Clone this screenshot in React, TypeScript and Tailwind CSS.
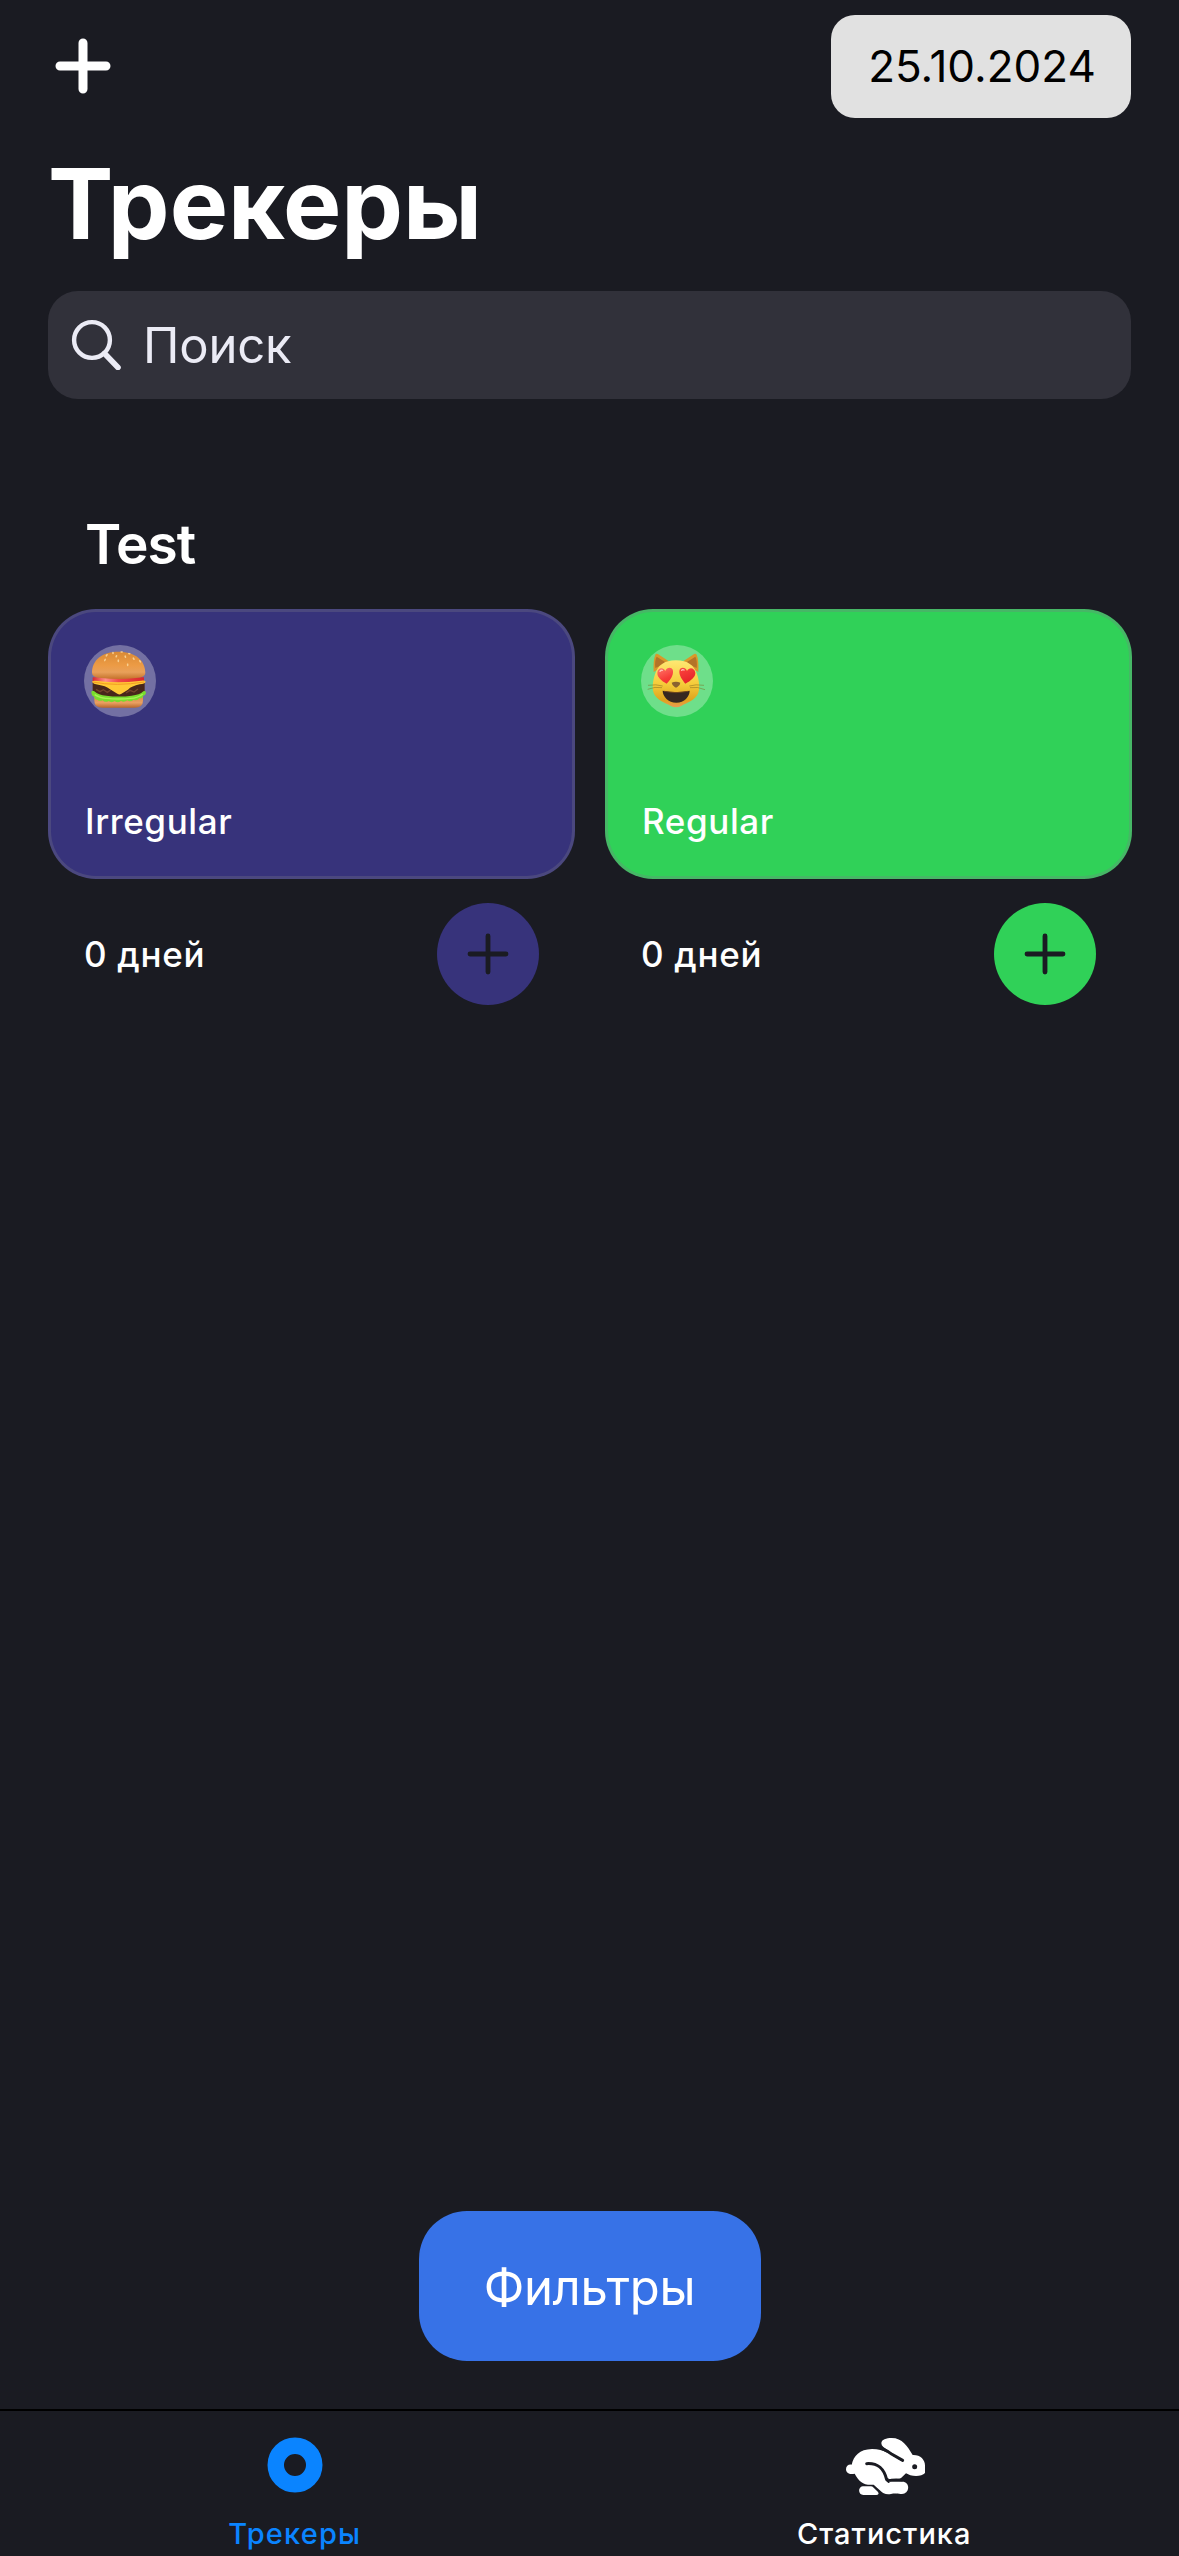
import type { ReactNode } from "react";

function PlusIcon() {
  return (
    <svg className="h-[56px] w-[56px]" viewBox="0 0 56 56" stroke="white" strokeWidth="9" strokeLinecap="round">
      <path d="M28 5v46M5 28h46" />
    </svg>
  );
}

function SearchIcon() {
  return (
    <svg className="-mt-[3px] h-[52px] w-[52px]" viewBox="0 0 52 52" fill="none" stroke="#ebebf5" strokeLinecap="round">
      <circle cx="22" cy="22" r="17.9" strokeWidth="4.4" />
      <path d="M36 37L48 49.5" strokeWidth="5.6" />
      <path d="M34 35l3 3" strokeWidth="4.4" />
    </svg>
  );
}

function Burger() {
  return (
    <svg className="h-[72px] w-[72px]" viewBox="24 27 216 216">
      <defs>
        <linearGradient id="bun" x1="0" y1="0" x2="0" y2="1">
          <stop offset="0" stopColor="#d98a35" />
          <stop offset="0.5" stopColor="#ec9b45" />
          <stop offset="0.75" stopColor="#e8a05a" />
          <stop offset="1" stopColor="#c4712b" />
        </linearGradient>
        <linearGradient id="heel" x1="0" y1="0" x2="0" y2="1">
          <stop offset="0" stopColor="#d98946" />
          <stop offset="0.6" stopColor="#eaa062" />
          <stop offset="1" stopColor="#b9682b" />
        </linearGradient>
        <linearGradient id="tomato" x1="0" y1="0" x2="1" y2="0">
          <stop offset="0" stopColor="#d9262b" />
          <stop offset="0.25" stopColor="#ff8f8b" />
          <stop offset="0.5" stopColor="#f04a48" />
          <stop offset="1" stopColor="#d9262b" />
        </linearGradient>
      </defs>
      <path d="M55 178h146v16q0 21-26 21H80q-25 0-25-21z" fill="url(#heel)" />
      <path d="M50 138h156v26q0 19-28 21H78q-28-2-28-21z" fill="#48261a" />
      <path d="M60 160l12 7 10-6 12 8 10-7M150 171l12-8 12 5 12-9" fill="none" stroke="#75442c" strokeWidth="4" />
      <path d="M46 168q3-6 9-2 12 12 36 13 38 5 76 0 24-2 35-13 7-3 8 4-1 7-8 9-3 11-12 7-7 10-17 5-10 8-19 2-11 8-19 1-9 9-19 1-9 7-18 0-11 6-18-2-9 4-16-2-8 0-9-9-8 0-9-14z" fill="#78dd2e" />
      <path d="M56 176q20 12 36 11 36 4 72 0 20 0 36-12" fill="none" stroke="#a8f255" strokeWidth="4" />
      <path d="M50 124h154v11q0 8-14 8H66q-16 0-16-8z" fill="url(#tomato)" />
      <path d="M48 137q3-5 18-2 60 8 123 0 18-4 20 2-2 6-18 8-24 5-35 16l-21 13q-5 3-11-1l-23-14q-13-10-34-13-16-2-19-9z" fill="#ffc935" />
      <path d="M50 138q70 14 155 0" fill="none" stroke="#f49a24" strokeWidth="3" />
      <path d="M48 111C48 72 78 47 128 47s80 26 80 64q0 13-28 15-52 6-104 0-28-2-28-15z" fill="url(#bun)" />
      <g fill="#f8cf90">
        <ellipse cx="111" cy="51" rx="2.5" ry="4" />
        <ellipse cx="137" cy="48" rx="4" ry="2.5" />
        <ellipse cx="160" cy="53" rx="4" ry="2.5" transform="rotate(20 160 53)" />
        <ellipse cx="92" cy="58" rx="2.5" ry="4.5" transform="rotate(35 92 58)" />
        <ellipse cx="87" cy="72" rx="2.5" ry="4.5" transform="rotate(25 87 72)" />
        <ellipse cx="121" cy="61" rx="2.5" ry="4" transform="rotate(25 121 61)" />
        <ellipse cx="148" cy="62" rx="2.5" ry="4" transform="rotate(-20 148 62)" />
        <ellipse cx="127" cy="74" rx="2.5" ry="4.5" />
        <ellipse cx="155" cy="86" rx="2.5" ry="4.5" />
        <ellipse cx="173" cy="68" rx="2.5" ry="4.5" transform="rotate(-35 173 68)" />
        <ellipse cx="192" cy="76" rx="2.5" ry="4.5" transform="rotate(-35 192 76)" />
      </g>
    </svg>
  );
}

function HeartCat() {
  return (
    <svg className="h-[72px] w-[72px]" viewBox="27 27 216 216">
      <defs>
        <linearGradient id="fur" x1="0" y1="0" x2="0" y2="1">
          <stop offset="0" stopColor="#ffe873" />
          <stop offset="0.5" stopColor="#f5cc3a" />
          <stop offset="0.85" stopColor="#dfa31c" />
          <stop offset="1" stopColor="#e99a55" />
        </linearGradient>
        <linearGradient id="heart" x1="0" y1="0" x2="1" y2="1">
          <stop offset="0" stopColor="#ff7a6a" />
          <stop offset="0.45" stopColor="#f73c38" />
          <stop offset="1" stopColor="#e01c24" />
        </linearGradient>
      </defs>
      <path d="M65 108c-1-22 0-40 5-52 2-5 7-3 11 0l34 23zM199 108c1-22 0-40-5-52-2-5-7-3-11 0l-34 23z" fill="#d9982a" />
      <path d="M70 96c-2-14 0-27 4-34l29 18zM194 96c2-14 0-27-4-34l-29 18z" fill="#b47328" />
      <path d="M132 73c36 0 54 15 63 42 6 18 10 42 3 58-8 18-33 27-49 36q-17 9-34 0c-16-9-41-18-49-36-7-16-3-40 3-58 9-27 27-42 63-42z" fill="url(#fur)" />
      <path d="M48 148q25-4 44 2M47 160q22-9 43-5M216 148q-25-4-44 2M219 161q-22-10-45-6" fill="none" stroke="#806a20" strokeWidth="2" opacity="0.75" />
      <path d="M104 143C88 134 75 123 76 110c1-14 17-18 24-5 5-14 22-12 23 0 1 14-8 27-19 38zM160 143c-10-12-19-25-18-38 1-12 18-14 23 0 7-13 23-9 25 5 1 13-14 24-30 33z" fill="url(#heart)" />
      <path d="M84 106q2-4 7-3M149 103q3-4 7-1" fill="none" stroke="#ffc0b5" strokeWidth="4" strokeLinecap="round" />
      <path d="M119 140q13-5 26 0 0 7-9 13-4 3-8 0-8-6-9-13z" fill="#8a6230" />
      <path d="M92 164q40 10 81 0c0 17-16 36-40 36s-41-19-41-36z" fill="#362820" />
      <path d="M96 166q37 8 73 0" fill="none" stroke="#70471c" strokeWidth="3" />
    </svg>
  );
}

function Rabbit() {
  return (
    <svg className="h-[57px] w-[79px]" viewBox="18 24 237 171">
      <g fill="white">
        <path d="M124 40C124 28 139 24 155 24c32 0 47 24 63 51 23-1 37 14 37 31v23c-8 10-29 10-44 7l-13-6-14 13q-4 4-10 4H145L150 155H187c23 0 23 32 3 36-15 3-20-3-37 1-16 3-25-3-31-9L101 164c-30 3-44-9-57-33-14 4-26-1-26-13 0-10 8-16 17-14C41 78 58 58 96 57c39 1 52 15 75 28q10 7 18 9L130 51q-6-5-6-11z" />
        <path d="M68 169h24q5 0 9 4l13 13c4 5 1 9-5 9H70c-16 0-17-24-2-26z" />
      </g>
      <g fill="none" stroke="#1a1b22" strokeLinecap="round">
        <path d="M80 101c33-2 51 12 60 48" strokeWidth="9" />
        <path d="M143 153q16-6 42-3 8 0 12-9" strokeWidth="7" />
        <path d="M143 147l3 9" strokeWidth="6" />
        <path d="M125 55q18 8 31 18l32 18" strokeWidth="9" />
      </g>
      <circle cx="224" cy="110" r="7.5" fill="#1a1b22" />
    </svg>
  );
}

interface TrackerProps {
  emoji: ReactNode;
  name: string;
  color: string;
}

function Tracker({ emoji, name, color }: TrackerProps) {
  return (
    <article className="flex flex-1 flex-col">
      <div className={`flex h-[270px] flex-col justify-between rounded-[48px] border-[3px] border-[#7a7c87]/30 px-[33px] pt-[33px] pb-[35px] ${color}`}>
        <div className="h-[72px] w-[72px] rounded-full bg-white/30">{emoji}</div>
        <p className="pl-px text-[35px] leading-[40px] font-medium tracking-[0.6px] text-white">{name}</p>
      </div>
      <div className="mt-[24px] flex h-[102px] items-center justify-between pr-[36px] pl-[36px]">
        <p className="text-[35px] leading-[40px] font-medium tracking-[0.7px] text-white">0 дней</p>
        <button className={`flex h-[102px] w-[102px] items-center justify-center rounded-full ${color}`}>
          <svg className="h-[42px] w-[42px]" viewBox="0 0 42 42" stroke="#1a1b22" strokeWidth="4.8" strokeLinecap="round">
            <path d="M21 3v36M3 21h36" />
          </svg>
        </button>
      </div>
    </article>
  );
}

export default function App() {
  return (
    <div className="flex h-[2556px] w-[1179px] flex-col overflow-hidden bg-[#1a1b22] font-['Inter','Liberation_Sans',sans-serif]">
      <header className="flex items-center justify-between pt-[15px] pr-[48px] pl-[55px]">
        <button className="-mt-[2px]">
          <PlusIcon />
        </button>
        <div className="flex h-[103px] w-[300px] items-center justify-center rounded-[24px] bg-[#e1e1e1] pb-px pl-[2px] text-[44px] leading-none text-black">
          25.10.2024
        </div>
      </header>

      <h1 className="mt-[26px] pl-[48px] text-[98px] leading-[120px] font-bold text-white">Трекеры</h1>

      <div className="mx-[48px] mt-[27px] flex h-[108px] items-center rounded-[30px] bg-[#31313a] pl-[22px]">
        <SearchIcon />
        <span className="mt-[2px] ml-[21px] text-[49px] leading-[60px] tracking-[-0.19px] text-[#ebebf5]">Поиск</span>
      </div>

      <main className="flex-1">
        <h2 className="mt-[115px] pl-[85px] text-[55px] leading-[60px] font-semibold tracking-[-1px] text-white">Test</h2>
        <section className="mt-[35px] flex gap-[30px] pr-[47px] pl-[48px]">
          <Tracker emoji={<Burger />} name="Irregular" color="bg-[#37337b]" />
          <Tracker emoji={<HeartCat />} name="Regular" color="bg-[#30d158]" />
        </section>
      </main>

      <button className="mx-auto mb-[48px] flex h-[150px] w-[342px] items-center justify-center rounded-[48px] bg-[#3772e7] pt-[2px] text-[49px] leading-none tracking-[-0.3px] text-white">
        Фильтры
      </button>

      <nav className="flex h-[147px] shrink-0 border-t-2 border-black">
        <div className="flex flex-1 flex-col items-center text-[#0a84ff]">
          <svg className="mt-[26px] h-[56px] w-[56px]" viewBox="0 0 56 56" fill="none" stroke="currentColor" strokeWidth="16.5">
            <circle cx="28" cy="28" r="19.25" />
          </svg>
          <span className="mt-[21px] text-[29px] leading-[40px] font-medium tracking-[1.2px]">Трекеры</span>
        </div>
        <div className="flex flex-1 flex-col items-center text-white">
          <div className="mt-[27px] ml-[3px]">
            <Rabbit />
          </div>
          <span className="mt-[19px] text-[29px] leading-[40px] font-medium tracking-[1.01px]">Статистика</span>
        </div>
      </nav>
    </div>
  );
}
